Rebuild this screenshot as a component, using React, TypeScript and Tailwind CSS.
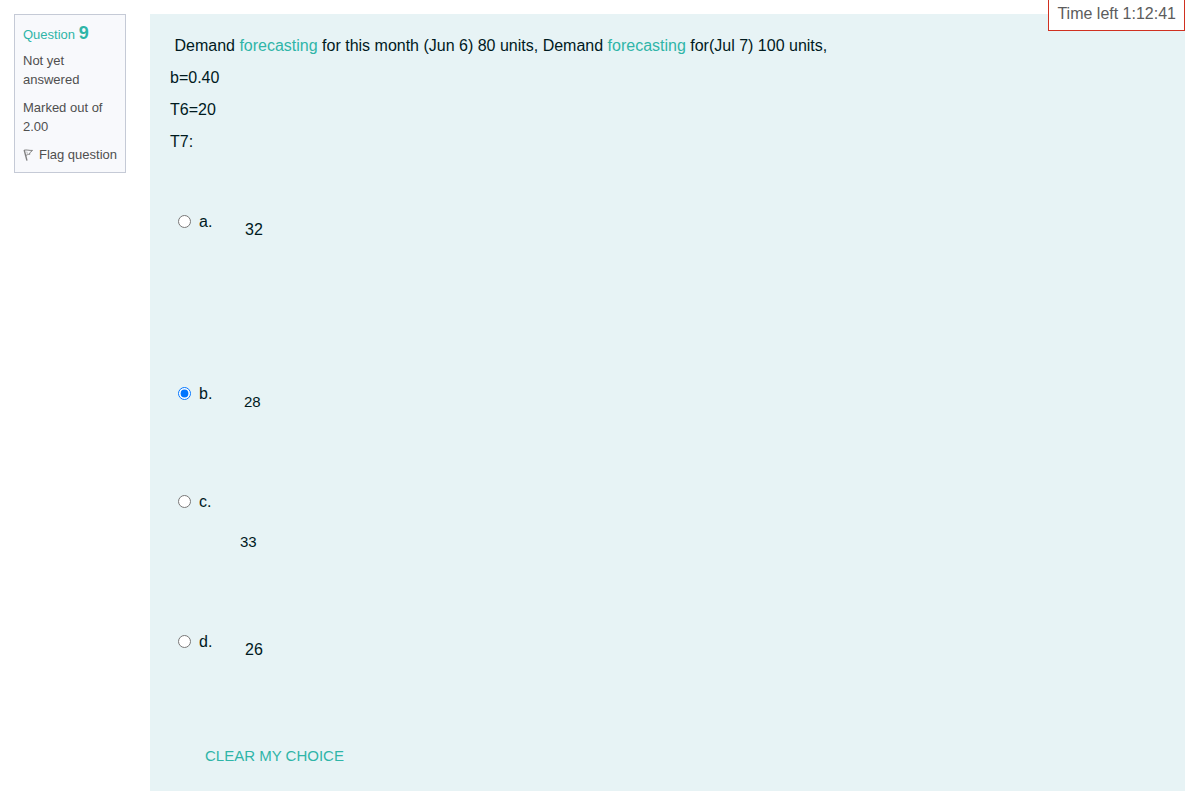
import { useState } from 'react'

interface Option {
    id: string
    value: string
    row: string
    text: string
}

const options: Option[] = [
    { id: 'a', value: '32', row: 'h-[172px]', text: 'mt-2 ml-[33px] text-base' },
    { id: 'b', value: '28', row: 'h-[108px]', text: 'mt-2 ml-8 text-[15px]' },
    { id: 'c', value: '33', row: 'h-[140px]', text: 'mt-10 ml-7 text-[15px]' },
    { id: 'd', value: '26', row: 'h-[114px]', text: 'mt-2 ml-[33px] text-base' },
]

function FlagIcon() {
    return (
        <svg width="10" height="13" viewBox="0 0 10 13" fill="none" stroke="#808080" aria-hidden="true">
            <path d="M1.2 2 L4 12.6" strokeWidth="1.4" />
            <path d="M1.2 2.2 C3.6 1.5 6 2.6 9.6 2.4 L6.6 5 L7 6.2 C5.2 6.2 4 6.8 2.6 7.8" strokeWidth="1" />
            <path d="M3.8 3.6 L4.4 5.8" stroke="#b5b5b5" strokeWidth="1" />
        </svg>
    )
}

function QuestionInfo() {
    return (
        <aside className="flex w-28 shrink-0 flex-col gap-[9px] border border-[#c5cad6] bg-[#f8f9fc] p-2 text-[13px] leading-[19px] text-[#4f4f4f]">
            <h2 className="h-[19px] leading-[21px] text-[#2fb5a8]">
                Question <span className="text-lg leading-[21px] font-bold">9</span>
            </h2>
            <p>Not yet answered</p>
            <p>Marked out of 2.00</p>
            <button type="button" className="flex items-center gap-[6px] whitespace-nowrap">
                <FlagIcon />
                Flag question
            </button>
        </aside>
    )
}

export default function App() {
    const [choice, setChoice] = useState<string | null>('b')

    return (
        <div className="flex items-start gap-6 bg-white pt-[14px] pr-[7px] pb-[14px] pl-[14px] font-['Liberation_Sans',Arial,sans-serif]">
            <QuestionInfo />

            <main className="min-w-0 grow bg-[#e7f3f5] px-5 pt-4 pb-[19px] text-base leading-8 text-[#001a1e]">
                <p>
                    &nbsp;Demand <a href="#forecasting" className="text-[#2fb5a8]">forecasting</a> for
                    this month (Jun 6) 80 units, Demand{' '}
                    <a href="#forecasting" className="text-[#2fb5a8]">forecasting</a> for(Jul 7) 100 units,
                </p>
                <p>b=0.40</p>
                <p>T6=20</p>
                <p>T7:</p>

                <div role="radiogroup" aria-label="Answer" className="mt-12">
                    {options.map((option) => (
                        <label key={option.id} className={`flex items-start pl-2 ${option.row}`}>
                            <input
                                type="radio"
                                name="answer"
                                className="mt-[9px] mr-2 size-[13px] shrink-0"
                                checked={choice === option.id}
                                onChange={() => setChoice(option.id)}
                            />
                            <span className="w-[13px] whitespace-nowrap">{option.id}.</span>
                            <span className={`leading-8 ${option.text}`}>{option.value}</span>
                        </label>
                    ))}
                </div>

                <button
                    type="button"
                    className="ml-[35px] block text-[15px] leading-8 text-[#2fb5a8] uppercase"
                    onClick={() => setChoice(null)}
                >
                    Clear my choice
                </button>
            </main>

            <div
                role="timer"
                className="absolute top-0 right-[7px] border border-t-0 border-[#d03020] bg-white px-2 pt-[2px] pb-1 text-base leading-6 text-[#5c5c5c]"
            >
                Time left 1:12:41
            </div>
        </div>
    )
}
